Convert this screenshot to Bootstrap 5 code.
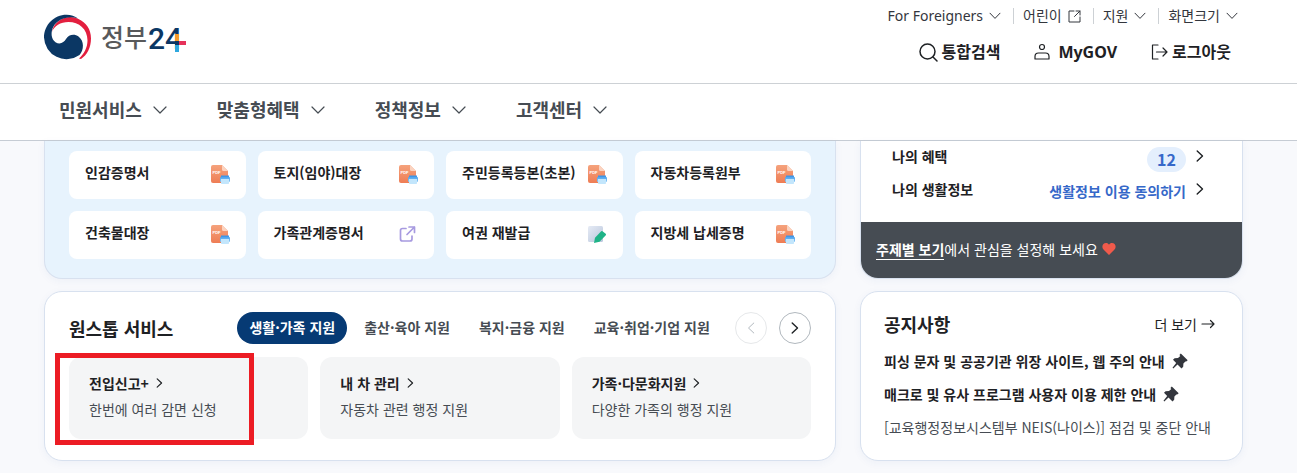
<!DOCTYPE html>
<html lang="ko">
<head>
<meta charset="utf-8">
<meta name="viewport" content="width=device-width, initial-scale=1">
<title>정부24</title>
<link href="https://cdn.jsdelivr.net/npm/bootstrap@5.3.0/dist/css/bootstrap.min.css" rel="stylesheet">
<style>
  body { font-family: "Noto Sans", "Noto Sans CJK KR", sans-serif; font-size: 14px; line-height: 20px; color: #1e2124; background: #f8f9fc; }
  a { color: inherit; text-decoration: none; }
  svg { flex: none; display: block; }
  .page-x { padding-left: 44px; padding-right: 54px; }
  .site-head { background: #fff; border-bottom: 1px solid #cdd1d5; height: 84px; }
  .ln { fill: none; stroke: currentColor; stroke-linecap: round; stroke-linejoin: round; }
  .head-side { padding: 4px 5px 0 0; }
  .util-list li { padding: 0 12px 0 9px; }
  .util-list li + li { border-left: 1px solid #cdd1d5; }
  .util-list li:last-child { padding-right: 0; }
  .util-list a { gap: 6px; color: #33363d; line-height: 16px; }
  .user-list { gap: 34px; font-size: 16px; font-weight: 700; padding-right: 7px; margin-top: 16px; line-height: 24px; }
  .user-list a { gap: 4px; }
  .main-menu { background: #fff; border-bottom: 1px solid #c6ccd4; height: 57px; }
  .main-menu ul { gap: 50px; padding-left: 15px; padding-bottom: 4px; }
  .main-menu a { gap: 11px; font-size: 18px; font-weight: 700; color: #464c53; line-height: 24px; }
  .board { font-family: "Noto Sans CJK KR", sans-serif; display: grid; grid-template-columns: 792fr 383fr; column-gap: 24px; row-gap: 12px; padding-bottom: 12px; }
  .panel { background: #fff; border: 1px solid #d8e1ef; border-radius: 18px; box-shadow: 0 2px 8px #2850a00d; }
  .panel-cut { border-top: 0; border-top-left-radius: 0; border-top-right-radius: 0; }
  .panel-blue { background: #e7f3fd; padding: 10px 24px 19px; }
  .tiles { display: grid; grid-template-columns: repeat(4, 1fr); gap: 12px; }
  .tile { height: 48px; background: #fff; border-radius: 8px; padding: 0 15px 6px 16px; font-weight: 700; }
  .tile svg { margin-top: 6px; }
  .mine { height: 81px; padding-left: 31px; padding-right: 36px; font-weight: 700; }
  .mine a { height: 33px; }
  .count { background: #e4effd; color: #3668c9; border-radius: 13px; font-size: 16px; line-height: 25px; padding: 0 10px; margin-top: 4px; }
  .blue-tx { color: #3668c9; }
  .interest { background: #464c53; color: #fff; height: 56px; padding: 0 15px 2px; }
  .interest a { font-weight: 700; border-bottom: 1px solid #fff; }
  .onestop { padding: 20px 24px 21px; }
  .sec-title { font-size: 18px; line-height: 24px; font-weight: 700; margin: 0; }
  .tabs { gap: 5px; margin-left: 64px; }
  .tabs button { border: 0; background: none; color: #464c53; font-weight: 700; border-radius: 16px; height: 32px; padding: 0 12px 2px; white-space: nowrap; }
  .tabs button.on { background: #063a74; color: #fff; }
  .arrows { gap: 12px; }
  .arrow { width: 32px; height: 32px; border-radius: 50%; border: 1px solid #b1b8be; background: #fff; padding: 0; color: #1e2124; }
  .arrow:disabled { border-color: #e6e8ea; color: #b1b8be; }
  .svc { display: grid; grid-template-columns: repeat(3, 1fr); gap: 12px; margin-top: 13px; }
  .svc-item { background: #f4f5f6; border-radius: 12px; height: 82px; padding: 16px 20px 0; position: relative; }
  .svc-item strong { display: flex; align-items: center; gap: 7px; }
  .svc-item span { display: block; margin-top: 6px; color: #464c53; }
  .marker-box { position: absolute; left: -14px; right: 54px; top: -4px; bottom: -6px; border: 5px solid #ec1c24; pointer-events: none; }
  .notice { padding: 20px 23px 0; }
  .notice ul { margin-top: 15px; }
  .notice li { height: 33px; }
  .notice li a { gap: 7px; white-space: nowrap; }
  .plain-item { color: #464c53; }
</style>
</head>
<body>
<svg width="0" height="0" class="position-absolute" aria-hidden="true">
  <defs>
    <linearGradient id="gOrange" x1="0" y1="0" x2="0" y2="1"><stop offset="0" stop-color="#f5a27c"/><stop offset="1" stop-color="#ee7d55"/></linearGradient>
    <linearGradient id="gBlue" x1="0" y1="0" x2="0" y2="1"><stop offset="0" stop-color="#4da3ee"/><stop offset="1" stop-color="#8cc8f6"/></linearGradient>
    <linearGradient id="gPaper" x1="0" y1="0" x2="1" y2="1"><stop offset="0" stop-color="#e6ebf5"/><stop offset="1" stop-color="#b9c6dc"/></linearGradient>
    <symbol id="down" viewBox="0 0 12 8"><path class="ln" d="M1 1.200l5 5.200 5-5.200"/></symbol>
    <symbol id="right" viewBox="0 0 8 12"><path class="ln" stroke-width="1.400" d="M1.200 1l5.300 5-5.300 5"/></symbol>
    <symbol id="pdf" viewBox="0 0 20 20">
      <path fill="url(#gOrange)" d="M2 0h9l6 6v10a2 2 0 0 1-2 2H2a2 2 0 0 1-2-2V2a2 2 0 0 1 2-2z"/>
      <path fill="#fbd3c0" d="M11 0l6 6h-4.500a1.500 1.500 0 0 1-1.500-1.500z"/>
      <text x="1.500" y="8.500" font-size="4" font-weight="700" fill="#fff" font-family="Liberation Sans, sans-serif">PDF</text>
      <path fill="#3e96e8" d="M10 10.500h8v3h-8z"/><rect x="9" y="12" width="10" height="5" rx="1" fill="url(#gBlue)"/>
      <path fill="#c3e6fc" d="M10 14h8v4.200a.8.800 0 0 1-.8.800h-6.400a.8.800 0 0 1-.8-.8z"/>
    </symbol>
    <symbol id="pin" viewBox="0 0 16 16"><path fill="#33363d" d="M8.800.6l6.900 6.600-1.500 1.400-.8-.2-2 2.200-.2 3.200-1.700 1.600-4-4L1.300 15.500l-.8-.8 3.700-4.600L1 6.700l1.600-1.500 3.400-.1 2.300-2.200-.9-1z"/></symbol>
  </defs>
</svg>

<header class="site-head page-x d-flex justify-content-between">
  <a href="#" class="pt-2 mt-1" aria-label="정부24">
    <svg width="146" height="56" viewBox="44 12 146 56" overflow="visible">
      <path fill="#e31f3f" d="M52 32C53 24 61 17.500 69 17c4-.2 7 .5 9.500 2C86 22.500 91 29 91 38.500c0 9-4 16.500-10 20.500l-2-.5c5-4.500 8.500-11 8.500-18C87.500 29 79 22 68.500 22 60.500 22 54 26 52 32z"/>
      <path fill="#0b3764" d="M78 18.500C68 15 57.500 19.500 53.500 26.500 50.500 32 51 39 55.500 42.200c4.500 2.800 8.500.3 10.500-3.200 2.500-4.500 8.500-5.500 12.500-2.500 6 4.500 5.500 13.500 1 18.500A22.500 22.500 0 0 1 44 37.500C44 25 54 14.700 66.500 14.700c4.500 0 8.500 1.300 11.500 3.800z"/>
      <text x="101" y="47" font-size="25" font-weight="500" fill="#58595b" font-family="Noto Sans CJK KR, sans-serif">정부</text>
      <text x="148" y="49" font-size="30" font-weight="500" fill="#0b3764" font-family="Roboto, sans-serif">24</text>
      <path fill="#f59b2c" d="M175 34h4v7h-4z"/><path fill="#2ea8df" d="M175 45h4v7h-4z"/><path fill="#0b3764" d="M175 41h4v4h-4z"/><path fill="#e6325a" d="M179 41h7v4h-7z"/>
    </svg>
  </a>
  <div class="head-side">
    <ul class="util-list list-unstyled d-flex justify-content-end mb-0 align-items-center pt-1">
      <li><a href="#" class="d-flex align-items-center">For Foreigners<svg width="12" height="8"><use href="#down"/></svg></a></li>
      <li><a href="#" class="d-flex align-items-center">어린이<svg width="13" height="13" viewBox="0 0 13 13"><path class="ln" d="M6 1H1v11h11V7M8 1h4v4M12 1L6.500 6.500"/></svg></a></li>
      <li><a href="#" class="d-flex align-items-center">지원<svg width="12" height="8"><use href="#down"/></svg></a></li>
      <li><a href="#" class="d-flex align-items-center">화면크기<svg width="12" height="8"><use href="#down"/></svg></a></li>
    </ul>
    <ul class="user-list list-unstyled d-flex justify-content-end mb-0">
      <li><a href="#" class="d-flex align-items-center"><svg width="19" height="19" viewBox="0 0 19 19"><circle cx="8.500" cy="8.500" r="7.500" class="ln" stroke-width="1.500"/><path class="ln" stroke-width="1.500" d="M14 14l4 4"/></svg>통합검색</a></li>
      <li><a href="#" class="d-flex align-items-center gap-2"><svg width="16" height="18" viewBox="0 0 16 18"><circle cx="8" cy="4" r="2.500" class="ln" stroke-width="1.200"/><path class="ln" stroke-width="1.200" d="M1 16v-2.500c0-2 1.500-3.500 3.500-3.500h7c2 0 3.500 1.500 3.500 3.500V16z"/></svg>MyGOV</a></li>
      <li><a href="#" class="d-flex align-items-center"><svg width="17" height="16" viewBox="0 0 17 16"><path class="ln" stroke-width="1.200" d="M7 1H1.500v14H7M5.500 8H16M12 4l4 4-4 4"/></svg>로그아웃</a></li>
    </ul>
  </div>
</header>
<nav class="main-menu page-x d-flex align-items-center">
  <ul class="list-unstyled d-flex mb-0">
    <li><a href="#" class="d-flex align-items-center">민원서비스<svg width="14" height="10" viewBox="0 0 14 10"><path class="ln" stroke-width="1.200" d="M1 2l6 6 6-6"/></svg></a></li>
    <li><a href="#" class="d-flex align-items-center">맞춤형혜택<svg width="14" height="10" viewBox="0 0 14 10"><path class="ln" stroke-width="1.200" d="M1 2l6 6 6-6"/></svg></a></li>
    <li><a href="#" class="d-flex align-items-center">정책정보<svg width="14" height="10" viewBox="0 0 14 10"><path class="ln" stroke-width="1.200" d="M1 2l6 6 6-6"/></svg></a></li>
    <li><a href="#" class="d-flex align-items-center">고객센터<svg width="14" height="10" viewBox="0 0 14 10"><path class="ln" stroke-width="1.200" d="M1 2l6 6 6-6"/></svg></a></li>
  </ul>
</nav>

<main class="board page-x">
  <section class="panel panel-cut panel-blue">
    <div class="tiles">
      <a href="#" class="tile d-flex align-items-center justify-content-between">인감증명서<svg width="20" height="20"><use href="#pdf"/></svg></a>
      <a href="#" class="tile d-flex align-items-center justify-content-between">토지(임야)대장<svg width="20" height="20"><use href="#pdf"/></svg></a>
      <a href="#" class="tile d-flex align-items-center justify-content-between">주민등록등본(초본)<svg width="20" height="20"><use href="#pdf"/></svg></a>
      <a href="#" class="tile d-flex align-items-center justify-content-between">자동차등록원부<svg width="20" height="20"><use href="#pdf"/></svg></a>
      <a href="#" class="tile d-flex align-items-center justify-content-between">건축물대장<svg width="20" height="20"><use href="#pdf"/></svg></a>
      <a href="#" class="tile d-flex align-items-center justify-content-between">가족관계증명서<svg width="20" height="20" viewBox="0 0 20 20" color="#a79ae0"><path class="ln" stroke-width="1.700" d="M7 3.500H3.500a2 2 0 0 0-2 2V14a2 2 0 0 0 2 2H11a2 2 0 0 0 2-2v-3M10 2h5.500v5.500M15.500 2L8 9.500"/></svg></a>
      <a href="#" class="tile d-flex align-items-center justify-content-between">여권 재발급<svg width="20" height="20" viewBox="0 0 20 20"><rect x="0" y="1" width="15" height="16" rx="1.500" fill="url(#gPaper)"/><path fill="#1fb387" d="M14.500 6.200l3.200 2.600a1 1 0 0 1 .1 1.400l-6.300 6.600-5.500 1.200 1-5.300 6.200-6.400a1 1 0 0 1 1.300-.1z"/></svg></a>
      <a href="#" class="tile d-flex align-items-center justify-content-between">지방세 납세증명<svg width="20" height="20"><use href="#pdf"/></svg></a>
    </div>
  </section>

  <section class="panel panel-cut overflow-hidden">
    <div class="mine">
      <a href="#" class="d-flex align-items-center"><span class="me-auto mb-1">나의 혜택</span><span class="count">12</span><svg class="ms-2 mb-1" width="12" height="12"><use href="#right"/></svg></a>
      <a href="#" class="d-flex align-items-center"><span class="me-auto mb-1">나의 생활정보</span><span class="blue-tx">생활정보 이용 동의하기</span><svg class="ms-2 mb-1" width="12" height="12"><use href="#right"/></svg></a>
    </div>
    <div class="interest d-flex align-items-center"><a href="#">주제별 보기</a>에서 관심을 설정해 보세요<svg class="ms-1" width="14" height="12" viewBox="0 0 14 12"><path fill="#f05a4b" d="M7 12L1.500 6.600C-1 3.500 1 0 4 0c1.400 0 2.400.7 3 1.700C7.600.7 8.600 0 10 0c3 0 5 3.500 2.500 6.600z"/></svg></div>
  </section>

  <section class="panel onestop">
    <div class="d-flex align-items-center">
      <h2 class="sec-title">원스톱 서비스</h2>
      <div class="tabs d-flex" role="tablist">
        <button type="button" role="tab" class="on">생활·가족 지원</button>
        <button type="button" role="tab">출산·육아 지원</button>
        <button type="button" role="tab">복지·금융 지원</button>
        <button type="button" role="tab">교육·취업·기업 지원</button>
      </div>
      <div class="arrows d-flex ms-auto">
        <button type="button" class="arrow d-flex align-items-center justify-content-center" aria-label="이전" disabled><svg width="8" height="12" viewBox="0 0 8 12"><path class="ln" d="M6.800 1L1.500 6l5.300 5"/></svg></button>
        <button type="button" class="arrow d-flex align-items-center justify-content-center" aria-label="다음"><svg width="8" height="12"><use href="#right"/></svg></button>
      </div>
    </div>
    <div class="svc">
      <a href="#" class="svc-item"><strong>전입신고+<svg width="7" height="10"><use href="#right"/></svg></strong><span>한번에 여러 감면 신청</span><i class="marker-box"></i></a>
      <a href="#" class="svc-item"><strong>내 차 관리<svg width="7" height="10"><use href="#right"/></svg></strong><span>자동차 관련 행정 지원</span></a>
      <a href="#" class="svc-item"><strong>가족·다문화지원<svg width="7" height="10"><use href="#right"/></svg></strong><span>다양한 가족의 행정 지원</span></a>
    </div>
  </section>

  <section class="panel notice">
    <div class="d-flex align-items-center justify-content-between">
      <h2 class="sec-title">공지사항</h2>
      <a href="#" class="d-flex align-items-center gap-1 pe-1">더 보기<svg width="14" height="10" viewBox="0 0 14 10"><path class="ln" stroke-width="1.200" d="M1 5h12M9.500 1.500L13 5 9.500 8.500"/></svg></a>
    </div>
    <ul class="list-unstyled mb-0">
      <li><a href="#" class="d-flex align-items-center fw-bold">피싱 문자 및 공공기관 위장 사이트, 웹 주의 안내<svg width="16" height="16"><use href="#pin"/></svg></a></li>
      <li><a href="#" class="d-flex align-items-center fw-bold">매크로 및 유사 프로그램 사용자 이용 제한 안내<svg width="16" height="16"><use href="#pin"/></svg></a></li>
      <li><a href="#" class="plain-item">[교육행정정보시스템부 NEIS(나이스)] 점검 및 중단 안내</a></li>
    </ul>
  </section>
</main>
<script src="https://cdn.jsdelivr.net/npm/bootstrap@5.3.0/dist/js/bootstrap.bundle.min.js"></script>
</body>
</html>
